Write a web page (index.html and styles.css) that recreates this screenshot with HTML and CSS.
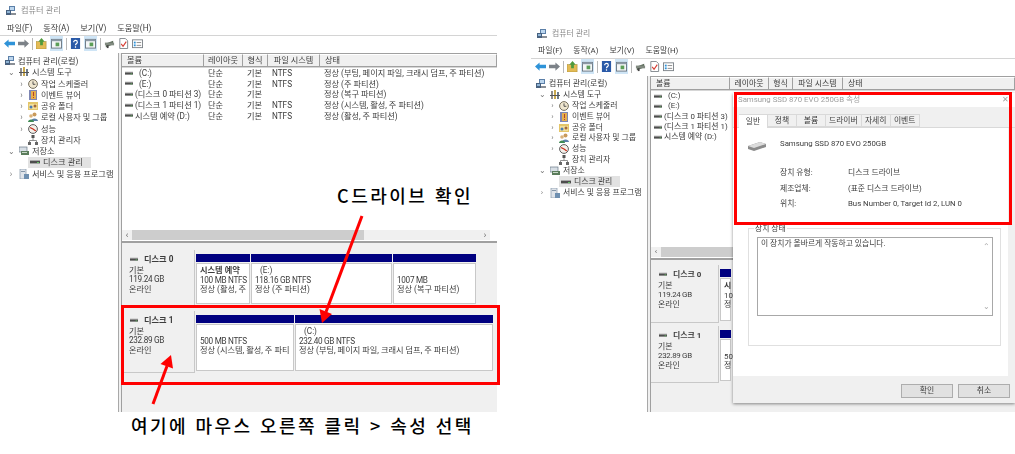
FILE: index.html
```html
<!DOCTYPE html>
<html lang="ko">

<head>
	<meta charset="utf-8">
	<title>컴퓨터 관리</title>
	<link rel="stylesheet" href="styles.css">
</head>

<body>
	<!-- icons used by both windows -->
	<svg class="defs" aria-hidden="true">
		<symbol id="i-mgmt" viewBox="0 0 10 10"><rect x="3" y="0" width="6" height="5" fill="#5b7fa8"/><rect x="4" y="1" width="4" height="3" fill="#bcd6ee"/><rect x="0" y="4" width="5" height="5" fill="#48617f"/><rect x="1" y="5" width="3" height="2" fill="#8fb4d6"/><rect x="5" y="7" width="5" height="2" fill="#8a8f96"/></symbol>
		<symbol id="i-tools" viewBox="0 0 10 10"><rect x="1" y="1" width="2" height="8" fill="#8d8d8d"/><rect x="4" y="0" width="2" height="9" fill="#c9a94e"/><rect x="7" y="2" width="2" height="7" fill="#6d7c8c"/><rect x="0" y="5" width="10" height="1" fill="#555"/></symbol>
		<symbol id="i-clock" viewBox="0 0 10 10"><circle cx="5" cy="5" r="4.4" fill="#efe6cf" stroke="#77705f"/><path d="M5 2.4V5.3H7.4" fill="none" stroke="#444" stroke-width=".9"/></symbol>
		<symbol id="i-event" viewBox="0 0 10 10"><rect x="1" y="0" width="8" height="10" fill="#7e86b4"/><rect x="3" y="1" width="5" height="8" fill="#e6b04c"/><rect x="5" y="2" width="1" height="4" fill="#b3402a"/><rect x="5" y="7" width="1" height="1" fill="#b3402a"/></symbol>
		<symbol id="i-share" viewBox="0 0 10 10"><rect x="0" y="1" width="10" height="8" fill="#e4c66a"/><rect x="1" y="3" width="8" height="5" fill="#f2df9b"/><circle cx="3" cy="6" r="1.5" fill="#4b7bb0"/><circle cx="7" cy="5" r="1.5" fill="#a3683a"/></symbol>
		<symbol id="i-users" viewBox="0 0 10 10"><circle cx="6.5" cy="2.5" r="2" fill="#c99a5b"/><path d="M3 9C3 5.5 10 5.5 10 9Z" fill="#5b7fa8"/><circle cx="3" cy="4" r="1.8" fill="#d9b27a"/><path d="M0 10C0 6.5 6 6.5 6 10Z" fill="#3f8a54"/></symbol>
		<symbol id="i-perf" viewBox="0 0 10 10"><circle cx="5" cy="5" r="4.4" fill="#f4f0ea" stroke="#5d5d5d"/><path d="M2 3.5L5 5 7.8 7" fill="none" stroke="#c8301f" stroke-width="1.3"/></symbol>
		<symbol id="i-devices" viewBox="0 0 10 10"><rect x="3.5" y="0" width="3" height="3" fill="#555"/><rect x="0" y="7" width="3" height="3" fill="#666"/><rect x="7" y="7" width="3" height="3" fill="#666"/><path d="M5 3V5.5M1.5 7V5.5H8.5V7" fill="none" stroke="#777" stroke-width=".8"/></symbol>
		<symbol id="i-storage" viewBox="0 0 10 10"><rect x="0" y="1" width="8" height="5" fill="#d8dfe6" stroke="#6b7a88" stroke-width=".7"/><rect x="2" y="5" width="8" height="4" fill="#5b7d5c"/><rect x="3" y="6" width="5" height="1" fill="#c8d8c8"/></symbol>
		<symbol id="i-disk" viewBox="0 0 10 6"><rect x="0" y="1" width="10" height="3.4" fill="#4d4d4d"/><rect x="0" y="1" width="10" height="1" fill="#a8a8a8"/><rect x="7" y="3" width="2" height="1" fill="#62c462"/></symbol>
		<symbol id="i-svc" viewBox="0 0 10 10"><rect x="1" y="0" width="6" height="10" fill="#dfe4ea" stroke="#8496a8" stroke-width=".7"/><rect x="5" y="5" width="5" height="5" fill="#6e8fb0"/><rect x="2" y="2" width="4" height="1" fill="#8496a8"/></symbol>
		<symbol id="i-back" viewBox="0 0 12 10"><path d="M0 5L5 .5V3H12V7H5V9.5Z" fill="#2f93d8"/></symbol>
		<symbol id="i-fwd" viewBox="0 0 12 10"><path d="M12 5L7 .5V3H0V7H7V9.5Z" fill="#7c8288"/></symbol>
		<symbol id="i-up" viewBox="0 0 12 12"><rect x="0" y="4" width="11" height="8" fill="#e3bb55" stroke="#a98a34" stroke-width=".6"/><path d="M6 0L9.5 4H7.5V8H4.5V4H2.5Z" fill="#4f9a3c"/></symbol>
		<symbol id="i-pane" viewBox="0 0 12 12"><rect x=".5" y="1.5" width="11" height="9.5" fill="#f4f6f8" stroke="#68747f"/><rect x=".5" y="1.5" width="11" height="2" fill="#8b98a5"/><rect x="5" y="5" width="4" height="4" fill="#5c9e58"/></symbol>
		<symbol id="i-help" viewBox="0 0 12 12"><rect x="1" y="0" width="10" height="12" fill="#2a5aa8"/><path d="M4 4.500C4 2 8 2 8 4.500C8 6 6 6 6 8M6 9V10.500" fill="none" stroke="#fff" stroke-width="1.300"/></symbol>
		<symbol id="i-drive" viewBox="0 0 12 12"><path d="M2 6L10 3V7L2 10Z" fill="#5a6a58"/><rect x="1" y="5" width="10" height="3" fill="#818a80"/><rect x="3" y="8" width="2" height="3" fill="#444"/></symbol>
		<symbol id="i-check" viewBox="0 0 12 12"><path d="M2 .5H8L10.500 3V11.500H2Z" fill="#fff" stroke="#7c8288"/><path d="M3.500 6.500L5.500 9 9 4" fill="none" stroke="#d63a30" stroke-width="1.200"/></symbol>
		<symbol id="i-list" viewBox="0 0 12 12"><rect x=".5" y="2" width="11" height="8.500" fill="#fff" stroke="#7c8288"/><rect x="2" y="4" width="2" height="2" fill="#2f93d8"/><rect x="2" y="7" width="2" height="2" fill="#2f93d8"/><rect x="5" y="4.500" width="5" height="1" fill="#888"/><rect x="5" y="7.500" width="5" height="1" fill="#888"/></symbol>
		<symbol id="i-ssd" viewBox="0 0 18 10"><path d="M0 5L12 1L18 3V6L6 10L0 8Z" fill="#8b8b8b"/><path d="M0 5L12 1L18 3L6 7Z" fill="#dcdcdc"/></symbol>
	</svg>

	<!-- left window -->
	<div class="win win-left">
		<div class="title-bar"><svg class="ico"><use href="#i-mgmt"/></svg><span>컴퓨터 관리</span></div>
		<div class="menu-bar"><span>파일(F)</span><span>동작(A)</span><span>보기(V)</span><span>도움말(H)</span></div>
		<div class="tool-bar">
			<svg class="tool"><use href="#i-back"/></svg>
			<svg class="tool"><use href="#i-fwd"/></svg>
			<i class="tool-sep"></i>
			<svg class="tool"><use href="#i-up"/></svg>
			<span class="tool-on"><svg class="tool"><use href="#i-pane"/></svg></span>
			<i class="tool-sep"></i>
			<svg class="tool"><use href="#i-help"/></svg>
			<span class="tool-on"><svg class="tool"><use href="#i-pane"/></svg></span>
			<i class="tool-sep"></i>
			<svg class="tool"><use href="#i-drive"/></svg>
			<svg class="tool"><use href="#i-check"/></svg>
			<svg class="tool"><use href="#i-list"/></svg>
		</div>
		<div class="panes">
			<div class="tree">
				<div class="tree-row lv0"><svg class="ico"><use href="#i-mgmt"/></svg>컴퓨터 관리(로컬)</div>
				<div class="tree-row lv1"><b class="chev">⌄</b><svg class="ico"><use href="#i-tools"/></svg>시스템 도구</div>
				<div class="tree-row lv2"><b class="chev">›</b><svg class="ico"><use href="#i-clock"/></svg>작업 스케줄러</div>
				<div class="tree-row lv2"><b class="chev">›</b><svg class="ico"><use href="#i-event"/></svg>이벤트 뷰어</div>
				<div class="tree-row lv2"><b class="chev">›</b><svg class="ico"><use href="#i-share"/></svg>공유 폴더</div>
				<div class="tree-row lv2"><b class="chev">›</b><svg class="ico"><use href="#i-users"/></svg>로컬 사용자 및 그룹</div>
				<div class="tree-row lv2"><b class="chev">›</b><svg class="ico"><use href="#i-perf"/></svg>성능</div>
				<div class="tree-row lv2"><b class="chev"></b><svg class="ico"><use href="#i-devices"/></svg>장치 관리자</div>
				<div class="tree-row lv1"><b class="chev">⌄</b><svg class="ico"><use href="#i-storage"/></svg>저장소</div>
				<div class="tree-row lv2"><b class="chev"></b><span class="tree-sel"><svg class="ico"><use href="#i-disk"/></svg>디스크 관리</span></div>
				<div class="tree-row lv1"><b class="chev">›</b><svg class="ico"><use href="#i-svc"/></svg>서비스 및 응용 프로그램</div>
			</div>
			<div class="main">
				<div class="list">
					<div class="list-head"><span>볼륨</span><span>레이아웃</span><span>형식</span><span>파일 시스템</span><span>상태</span></div>
					<div class="list-body">
						<div class="list-row"><span class="vol"><svg class="dk"><use href="#i-disk"/></svg><em>(C:)</em></span><span>단순</span><span>기본</span><span>NTFS</span><span>정상 (부팅, 페이지 파일, 크래시 덤프, 주 파티션)</span></div>
						<div class="list-row"><span class="vol"><svg class="dk"><use href="#i-disk"/></svg><em>(E:)</em></span><span>단순</span><span>기본</span><span>NTFS</span><span>정상 (주 파티션)</span></div>
						<div class="list-row"><span class="vol"><svg class="dk"><use href="#i-disk"/></svg>(디스크 0 파티션 3)</span><span>단순</span><span>기본</span><span></span><span>정상 (복구 파티션)</span></div>
						<div class="list-row"><span class="vol"><svg class="dk"><use href="#i-disk"/></svg>(디스크 1 파티션 1)</span><span>단순</span><span>기본</span><span>NTFS</span><span>정상 (시스템, 활성, 주 파티션)</span></div>
						<div class="list-row"><span class="vol"><svg class="dk"><use href="#i-disk"/></svg>시스템 예약 (D:)</span><span>단순</span><span>기본</span><span>NTFS</span><span>정상 (활성, 주 파티션)</span></div>
					</div>
					<div class="hscroll"><b>‹</b><i class="thumb"></i><b class="end">›</b></div>
				</div>
				<div class="lower">
					<div class="disk disk-0">
						<div class="disk-label"><div class="disk-name"><svg class="dk"><use href="#i-disk"/></svg>디스크 0</div><div>기본</div><div class="size">119.24 GB</div><div>온라인</div></div>
						<div class="part p-54"><div class="part-top"></div><div class="part-body"><strong>시스템 예약</strong><div class="size">100 MB NTFS</div><div>정상 (활성, 주</div></div></div>
						<div class="part p-141"><div class="part-top"></div><div class="part-body"><div class="drv">(E:)</div><div class="size">118.16 GB NTFS</div><div>정상 (주 파티션)</div></div></div>
						<div class="part p-83"><div class="part-top"></div><div class="part-body"><div class="drv">&nbsp;</div><div class="size">1007 MB</div><div>정상 (복구 파티션)</div></div></div>
					</div>
					<div class="disk disk-1">
						<div class="disk-label"><div class="disk-name"><svg class="dk"><use href="#i-disk"/></svg>디스크 1</div><div>기본</div><div class="size">232.89 GB</div><div>온라인</div></div>
						<div class="part p-98"><div class="part-top"></div><div class="part-body"><div class="drv">&nbsp;</div><div class="size">500 MB NTFS</div><div>정상 (시스템, 활성, 주 파티</div></div></div>
						<div class="part p-198"><div class="part-top"></div><div class="part-body"><div class="drv">(C:)</div><div class="size">232.40 GB NTFS</div><div>정상 (부팅, 페이지 파일, 크래시 덤프, 주 파티션)</div></div></div>
					</div>
				</div>
			</div>
		</div>
	</div>

	<!-- right window -->
	<div class="win win-right">
		<div class="title-bar"><svg class="ico"><use href="#i-mgmt"/></svg><span>컴퓨터 관리</span></div>
		<div class="menu-bar"><span>파일(F)</span><span>동작(A)</span><span>보기(V)</span><span>도움말(H)</span></div>
		<div class="tool-bar">
			<svg class="tool"><use href="#i-back"/></svg>
			<svg class="tool"><use href="#i-fwd"/></svg>
			<i class="tool-sep"></i>
			<svg class="tool"><use href="#i-up"/></svg>
			<span class="tool-on"><svg class="tool"><use href="#i-pane"/></svg></span>
			<i class="tool-sep"></i>
			<svg class="tool"><use href="#i-help"/></svg>
			<span class="tool-on"><svg class="tool"><use href="#i-pane"/></svg></span>
			<i class="tool-sep"></i>
			<svg class="tool"><use href="#i-drive"/></svg>
			<svg class="tool"><use href="#i-check"/></svg>
			<svg class="tool"><use href="#i-list"/></svg>
		</div>
		<div class="panes">
			<div class="tree">
				<div class="tree-row lv0"><svg class="ico"><use href="#i-mgmt"/></svg>컴퓨터 관리(로컬)</div>
				<div class="tree-row lv1"><b class="chev">⌄</b><svg class="ico"><use href="#i-tools"/></svg>시스템 도구</div>
				<div class="tree-row lv2"><b class="chev">›</b><svg class="ico"><use href="#i-clock"/></svg>작업 스케줄러</div>
				<div class="tree-row lv2"><b class="chev">›</b><svg class="ico"><use href="#i-event"/></svg>이벤트 뷰어</div>
				<div class="tree-row lv2"><b class="chev">›</b><svg class="ico"><use href="#i-share"/></svg>공유 폴더</div>
				<div class="tree-row lv2"><b class="chev">›</b><svg class="ico"><use href="#i-users"/></svg>로컬 사용자 및 그룹</div>
				<div class="tree-row lv2"><b class="chev">›</b><svg class="ico"><use href="#i-perf"/></svg>성능</div>
				<div class="tree-row lv2"><b class="chev"></b><svg class="ico"><use href="#i-devices"/></svg>장치 관리자</div>
				<div class="tree-row lv1"><b class="chev">⌄</b><svg class="ico"><use href="#i-storage"/></svg>저장소</div>
				<div class="tree-row lv2"><b class="chev"></b><span class="tree-sel"><svg class="ico"><use href="#i-disk"/></svg>디스크 관리</span></div>
				<div class="tree-row lv1"><b class="chev">›</b><svg class="ico"><use href="#i-svc"/></svg>서비스 및 응용 프로그램</div>
			</div>
			<div class="main">
				<div class="list">
					<div class="list-head"><span>볼륨</span><span>레이아웃</span><span>형식</span><span>파일 시스템</span><span>상태</span></div>
					<div class="list-body">
						<div class="list-row"><span class="vol"><svg class="dk"><use href="#i-disk"/></svg><em>(C:)</em></span></div>
						<div class="list-row"><span class="vol"><svg class="dk"><use href="#i-disk"/></svg><em>(E:)</em></span></div>
						<div class="list-row"><span class="vol"><svg class="dk"><use href="#i-disk"/></svg>(디스크 0 파티션 3)</span></div>
						<div class="list-row"><span class="vol"><svg class="dk"><use href="#i-disk"/></svg>(디스크 1 파티션 1)</span></div>
						<div class="list-row"><span class="vol"><svg class="dk"><use href="#i-disk"/></svg>시스템 예약 (D:)</span></div>
					</div>
					<div class="hscroll"><b>‹</b><i class="thumb"></i><b class="end">›</b></div>
				</div>
				<div class="lower">
					<div class="disk disk-0">
						<div class="disk-label"><div class="disk-name"><svg class="dk"><use href="#i-disk"/></svg>디스크 0</div><div>기본</div><div class="size">119.24 GB</div><div>온라인</div></div>
						<div class="part p-11"><div class="part-top"></div><div class="part-body"><strong>시</strong><div>10</div><div>정</div></div></div>
					</div>
					<div class="disk disk-1">
						<div class="disk-label"><div class="disk-name"><svg class="dk"><use href="#i-disk"/></svg>디스크 1</div><div>기본</div><div class="size">232.89 GB</div><div>온라인</div></div>
						<div class="part p-11"><div class="part-top"></div><div class="part-body"><div class="drv">&nbsp;</div><div>50</div><div>정</div></div></div>
					</div>
				</div>
			</div>
		</div>
	</div>

	<!-- properties dialog, over the right window -->
	<div class="dialog">
		<div class="dlg-title"><span>Samsung SSD 870 EVO 250GB 속성</span><span class="dlg-x">✕</span></div>
		<div class="dlg-tabs"><span class="tab tab-on">일반</span><span class="tab">정책</span><span class="tab">볼륨</span><span class="tab">드라이버</span><span class="tab">자세히</span><span class="tab">이벤트</span></div>
		<div class="dlg-page">
			<div class="dlg-head"><svg class="ssd"><use href="#i-ssd"/></svg><span>Samsung SSD 870 EVO 250GB</span></div>
			<div class="dlg-info">
				<span>장치 유형:</span><span>디스크 드라이브</span>
				<span>제조업체:</span><span>(표준 디스크 드라이브)</span>
				<span>위치:</span><span>Bus Number 0, Target Id 2, LUN 0</span>
			</div>
			<div class="group">
				<div class="legend">장치 상태</div>
				<div class="status">이 장치가 올바르게 작동하고 있습니다.<b class="up">⌃</b><b class="down">⌄</b></div>
			</div>
		</div>
		<div class="dlg-foot"><span class="btn">확인</span><span class="btn">취소</span></div>
	</div>

	<!-- annotations -->
	<div class="mark mark-disk"></div>
	<div class="mark mark-dlg"></div>
	<svg class="arrows" viewBox="0 0 1015 454">
		<path class="arrow" d="M362 216L326 312"/>
		<path class="head" d="M322 323L319.500 309 332 314Z"/>
		<path class="arrow" d="M153 404L167 366"/>
		<path class="head" d="M171 355L160.500 364 173 368.500Z"/>
	</svg>
	<div class="note note-c">C드라이브 확인</div>
	<div class="note note-menu">여기에 마우스 오른쪽 클릭 &gt; 속성 선택</div>
</body>

</html>
```

FILE: styles.css
```css
body {
	margin: 0;
	width: 1015px;
	height: 454px;
	overflow: hidden;
	background: #fff;
	font-family: Roboto, "Noto Sans CJK KR", sans-serif;
	line-height: 1;
	color: #3c3c3c;
}

.defs {
	position: absolute;
	width: 0;
	height: 0;
}

/* windows */
.win {
	position: absolute;
	top: 0;
	display: flex;
	flex-direction: column;
	filter: blur(.3px);
}

.win-left {
	left: 0;
	width: 497px;
	height: 412px;
	font-size: 8.2px;
	--tree-w: 119px;
	--row-h: 11.25px;
	--list-row: 10.6px;
	--cols: 82px 39px 25px 52px 1fr;
	--list-h: 189px;
	--label-w: 73px;
	--disk0-h: 56px;
	--disk1-h: 62px;
	--disk-gap: 5px;
	--lower-top: 7px;
}

.win-right {
	left: 531px;
	top: 23px;
	width: 484px;
	height: 389px;
	font-size: 7.9px;
	--tree-w: 117px;
	--row-h: 10.9px;
	--list-row: 10.3px;
	--cols: 79px 39px 24px 50px 1fr;
	--list-h: 183px;
	--label-w: 68px;
	--disk0-h: 58px;
	--disk1-h: 57px;
	--disk-gap: 3px;
	--lower-top: 5px;
}

.title-bar {
	display: flex;
	align-items: center;
	gap: 5px;
	height: 21px;
	padding-left: 6px;
	color: #8c8c8c;
}

.menu-bar {
	display: flex;
	gap: 11px;
	height: 14px;
	padding-left: 7px;
	align-items: center;
	border-bottom: 1px solid #d4d4d4;
}

.tool-bar {
	display: flex;
	align-items: center;
	gap: 3px;
	height: 15px;
	padding-left: 4px;
}

.tool {
	width: 11px;
	height: 11px;
	display: block;
}

.tool-on {
	background: #cfe5f6;
	padding: 2px 1px;
}

.tool-sep {
	width: 1px;
	height: 12px;
	background: #b8b8b8;
}

.panes {
	flex: 1;
	display: flex;
	min-height: 0;
	margin-top: 2px;
	background: #f0f0f0;
}

.ico {
	width: 10px;
	height: 10px;
	flex: none;
}

.dk {
	width: 8px;
	height: 5px;
	flex: none;
}

/* tree on the left */
.tree {
	width: var(--tree-w);
	flex: none;
	box-sizing: border-box;
	padding-top: 2.5px;
	background: #fff;
	border-right: 1px solid #a8a8a8;
	white-space: nowrap;
}

.tree-row {
	display: flex;
	align-items: center;
	gap: 3px;
	height: var(--row-h);
}

.lv0 {
	padding-left: 5px;
}

.lv1 {
	padding-left: 6px;
}

.lv2 {
	padding-left: 18px;
}

.chev {
	width: 7px;
	flex: none;
	font-weight: normal;
	color: #777;
	text-align: center;
}

.lv1 .chev {
	width: 10px;
}

.tree-sel {
	display: flex;
	align-items: center;
	gap: 3px;
	height: 11px;
	padding: 0 8px 0 2px;
	background: #e2e2e2;
}

/* volume list */
.main {
	flex: 1;
	min-width: 0;
	display: flex;
	flex-direction: column;
	margin-left: 2px;
}

.list {
	height: var(--list-h);
	box-sizing: border-box;
	flex: none;
	display: flex;
	flex-direction: column;
	background: #fff;
	border: 1px solid #a0a0a0;
	border-right: 0;
}

.list-head {
	display: grid;
	grid-template-columns: var(--cols);
	height: 13px;
	background: #f0f0f0;
	border-bottom: 1px solid #d6d6d6;
}

.list-head span {
	display: flex;
	align-items: center;
	justify-content: center;
	border-right: 1px solid #a0a0a0;
	border-bottom: 1px solid #a0a0a0;
	border-top: 1px solid #fff;
}

.list-head span:first-child,
.list-head span:last-child {
	justify-content: flex-start;
	padding-left: 5px;
}

.list-body {
	flex: 1;
	min-height: 0;
}

.list-row {
	display: grid;
	grid-template-columns: var(--cols);
	height: var(--list-row);
	align-items: center;
	white-space: nowrap;
}

.list-row span {
	padding-left: 4px;
}

.vol {
	display: flex;
	align-items: center;
	gap: 2px;
	padding-left: 3px !important;
}

.vol em {
	margin-left: 4px;
	font-style: normal;
}

.hscroll {
	display: flex;
	align-items: center;
	height: 10px;
	margin-right: 7px;
	background: #f0f0f0;
	color: #555;
	margin-bottom: 1px;
}

.hscroll b {
	width: 10px;
	text-align: center;
	font-weight: normal;
}

.hscroll .end {
	margin-left: auto;
}

.thumb {
	width: 232px;
	height: 100%;
	background: #cdcdcd;
}

/* disks */
.lower {
	flex: 1;
	padding-top: var(--lower-top);
	border-top: 1px solid #a0a0a0;
	border-left: 1px solid #a0a0a0;
}

.disk {
	display: flex;
	gap: 1px;
	white-space: nowrap;
}

.disk-0 {
	height: var(--disk0-h);
}

.disk-1 {
	height: var(--disk1-h);
	margin-top: var(--disk-gap);
}

.disk-label {
	width: var(--label-w);
	flex: none;
	box-sizing: border-box;
	padding: 5px 0 0 7px;
	background: #f0f0f0;
	border-right: 1px solid #c8c8c8;
	border-bottom: 1px solid #c8c8c8;
	line-height: 9.6px;
}

.disk-name {
	display: flex;
	align-items: center;
	gap: 6px;
	margin-bottom: 1px;
	padding-left: 1px;
	font-weight: 700;
}

/* size lines run a little narrower than the rest */
.size {
	letter-spacing: -.3px;
}

.part {
	flex: none;
	margin-top: 4px;
	height: calc(100% - 6px);
	display: flex;
	flex-direction: column;
}

.p-11 {
	width: 11px;
}

.p-54 {
	width: 54px;
}

.p-83 {
	width: 83px;
}

.p-98 {
	width: 98px;
}

.p-141 {
	width: 141px;
}

.p-198 {
	width: 198px;
}

.part-top {
	height: 8px;
	flex: none;
	background: #000080;
}

.part-body {
	flex: 1;
	margin-top: 1px;
	padding: 2px 0 0 3px;
	background: #fff;
	border: 1px solid #c8c8c8;
	line-height: 9.6px;
}

.part-body strong {
	display: block;
}

.drv {
	padding-left: 5px;
}

/* dialog */
.dialog {
	position: absolute;
	left: 733px;
	top: 93px;
	width: 282px;
	height: 310px;
	display: flex;
	flex-direction: column;
	background: #f0f0f0;
	box-shadow: 0 1px 3px rgba(0, 0, 0, .45);
	filter: blur(.3px);
	font-size: 7.8px;
}

.dlg-title {
	display: flex;
	align-items: center;
	justify-content: space-between;
	height: 14px;
	padding: 0 6px 0 5px;
	background: #fff;
	color: #a0a0a0;
}

.dlg-tabs {
	display: flex;
	height: 13px;
	margin-top: 7px;
	padding-left: 6px;
	border-bottom: 1px solid #d9d9d9;
}

.tab {
	display: flex;
	align-items: center;
	justify-content: center;
	padding: 0 3px;
	min-width: 22px;
	border: 1px solid #d9d9d9;
	border-left: 0;
}

.tab-on {
	background: #fff;
	border-bottom: 0;
	height: 14px;
}

.dlg-page {
	flex: 1;
	margin-right: 7px;
	background: #fff;
	padding: 12px 7px 0 15px;
}

.dlg-head {
	display: flex;
	gap: 14px;
	height: 16px;
}

.ssd {
	width: 18px;
	height: 10px;
	margin-top: 1px;
}

.dlg-info {
	display: grid;
	grid-template-columns: 68px 1fr;
	row-gap: 7.500px;
	line-height: 8px;
	margin: 13px 0 0 32px;
}

.group {
	position: relative;
	height: 118px;
	box-sizing: border-box;
	margin-top: 20px;
	padding: 8px 7px 0 8px;
	border: 1px solid #e0e0e0;
}

.legend {
	position: absolute;
	top: -4px;
	left: 5px;
	padding: 0 1px;
	background: #fff;
}

.status {
	position: relative;
	height: 79px;
	box-sizing: border-box;
	padding: 2px 3px;
	border: 1px solid #a8a8a8;
}

.status b {
	position: absolute;
	right: 2px;
	color: #aaa;
	font-weight: normal;
}

.up {
	top: 5px;
}

.down {
	bottom: 4px;
}

.dlg-foot {
	display: flex;
	justify-content: flex-end;
	gap: 5px;
	height: 27px;
	padding: 8px 5px 0 0;
	box-sizing: border-box;
}

.btn {
	display: flex;
	align-items: center;
	justify-content: center;
	width: 52px;
	height: 14px;
	background: #e1e1e1;
	border: 1px solid #adadad;
	box-sizing: border-box;
}

/* red annotations */
.mark {
	position: absolute;
	box-sizing: border-box;
	border: 3px solid #f00;
}

.mark-disk {
	left: 121px;
	top: 305px;
	width: 379px;
	height: 80px;
}

.mark-dlg {
	left: 734px;
	top: 92px;
	width: 278px;
	height: 133px;
}

.arrows {
	position: absolute;
	left: 0;
	top: 0;
	width: 1015px;
	height: 454px;
}

.arrow {
	stroke: #f00;
	stroke-width: 3;
	fill: none;
}

.head {
	fill: #f00;
}

.note {
	position: absolute;
	white-space: nowrap;
	color: #000;
	font-family: "Noto Sans CJK KR", sans-serif;
	font-size: 18px;
	font-weight: 500;
	line-height: 22px;
}

.note-c {
	left: 337px;
	top: 184px;
	letter-spacing: 2.500px;
}

.note-menu {
	left: 131px;
	top: 414px;
	letter-spacing: 2.450px;
}
```
